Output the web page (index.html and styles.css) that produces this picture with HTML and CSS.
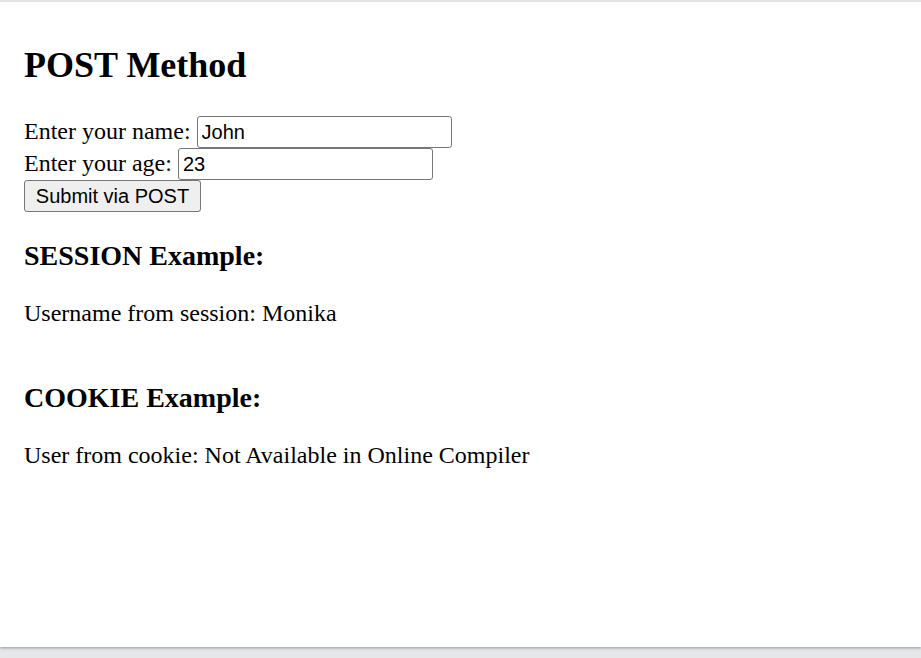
FILE: index.html
```html
<!DOCTYPE html>
<html>
<head>
<meta charset="utf-8">
<link rel="stylesheet" href="styles.css">
</head>
<body>
<div class="frame">
  <div class="page">
    <h2 class="title">POST Method</h2>
    <form class="form">
      Enter your name: <input class="field" type="text" value="John"><br>
      Enter your age: <input class="field" type="text" value="23"><br>
      <button class="btn" type="button">Submit via POST</button>
    </form>
    <h3 class="sub">SESSION Example:</h3>
    <p class="text">Username from session: Monika</p>
    <div class="spacer"></div>
    <h3 class="sub">COOKIE Example:</h3>
    <p class="text">User from cookie: Not Available in Online Compiler</p>
  </div>
</div>
</body>
</html>
```

FILE: styles.css
```css
html, body {
  margin: 0;
  padding: 0;
  background: #e6e7e9;
  height: 100%;
}
.frame {
  border-top: 2px solid #e3e3e3;
  height: 647px;
  box-sizing: border-box;
  background: #fff;
  box-shadow: 0 1px 3px rgba(0,0,0,0.35);
}
.page {
  padding: 12px 24px 0;
  font-family: "Liberation Serif", "Times New Roman", serif;
  font-size: 24px;
  color: #000;
  display: flow-root;
}
.title {
  font-size: 36px;
  font-weight: bold;
  margin: 30px 0;
}
.form {
  margin: 0;
}
.field {
  font-family: "Liberation Sans", Arial, sans-serif;
  font-size: 20px;
  height: 32px;
  width: 255px;
  box-sizing: border-box;
  border: 1.5px solid #767676;
  border-radius: 3px;
  padding: 1px 4px;
  vertical-align: baseline;
  margin: 0;
  color: #000;
}
.btn {
  font-family: "Liberation Sans", Arial, sans-serif;
  font-size: 20px;
  height: 32px;
  width: 177px;
  box-sizing: border-box;
  border: 1.5px solid #767676;
  border-radius: 3px;
  background: #efefef;
  padding: 1px 8px;
  margin: 0;
  vertical-align: baseline;
  color: #000;
}
.sub {
  font-size: 28px;
  font-weight: bold;
  margin: 28px 0;
}
.text {
  margin: 24px 0;
}
.spacer {
  height: 3px;
}
```
